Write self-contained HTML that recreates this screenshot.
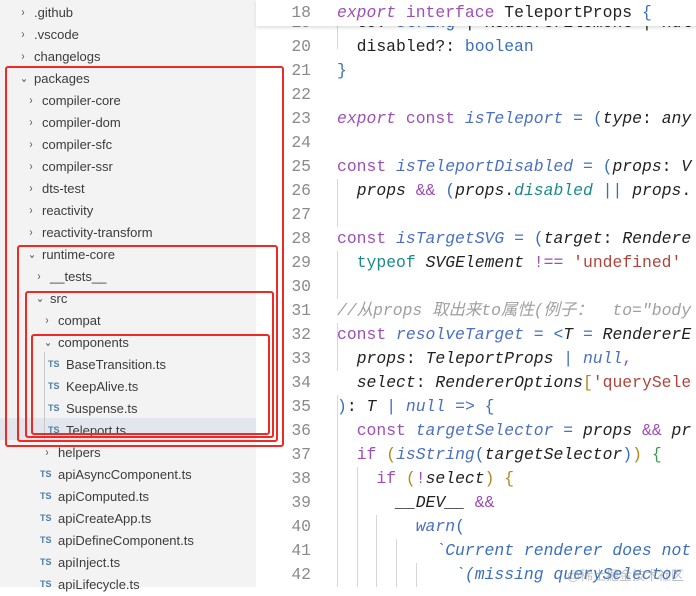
<!DOCTYPE html>
<html><head><meta charset="utf-8"><style>
*{margin:0;padding:0;box-sizing:border-box}
body{width:696px;height:587px;overflow:hidden;background:#fff;position:relative;font-family:"Liberation Sans","Noto Sans CJK SC",sans-serif}
#side{position:absolute;left:0;top:0;width:256px;height:587px;background:#f3f3f3}
.r{position:absolute;left:0;width:256px;height:22px;line-height:23px;font-size:13px;color:#3c3c3c;white-space:nowrap}
.r .c{position:absolute;top:0;font-size:12px;color:#555;transform:scaleX(.8)}
.r .t{position:absolute;top:0}
.ts{position:absolute;top:0;font-size:9px;font-weight:bold;color:#4a7ea8}
.box{position:absolute;border:2.5px solid #ee2a24;border-radius:3px}
#ed{position:absolute;left:256px;top:0;width:440px;height:587px;font-family:"Liberation Mono","Noto Sans CJK SC",monospace;font-size:16.4px}
.l{position:absolute;left:0;width:440px;height:24px;line-height:24px;white-space:pre}
.n{position:absolute;left:0;width:55px;text-align:right;color:#8a8a8a}
.k{position:absolute;left:81px;color:#222}
.p{color:#9d4fb8}.pi{color:#9d4fb8;font-style:italic}
.f{color:#4c6fc4;font-style:italic}.i{font-style:italic;color:#222}
.b{color:#3a6fc0}.s{color:#b0443c}.tq{color:#1a8a8a}.g{color:#a0a0a0;font-style:italic}
.y{color:#b08a1a}.tl{color:#3a6fc0;font-style:italic}.op{color:#4a6fc0}
.guide{position:absolute;width:1px;background:#d6d6d6}
</style></head><body>
<div id="side">
<div class="r" style="top:1px"><span class="c" style="left:21px">›</span><span class="t" style="left:34px">.github</span></div>
<div class="r" style="top:23px"><span class="c" style="left:21px">›</span><span class="t" style="left:34px">.vscode</span></div>
<div class="r" style="top:45px"><span class="c" style="left:21px">›</span><span class="t" style="left:34px">changelogs</span></div>
<div class="r" style="top:67px"><span class="c" style="left:19px">⌄</span><span class="t" style="left:34px">packages</span></div>
<div class="r" style="top:89px"><span class="c" style="left:29px">›</span><span class="t" style="left:42px">compiler-core</span></div>
<div class="r" style="top:111px"><span class="c" style="left:29px">›</span><span class="t" style="left:42px">compiler-dom</span></div>
<div class="r" style="top:133px"><span class="c" style="left:29px">›</span><span class="t" style="left:42px">compiler-sfc</span></div>
<div class="r" style="top:155px"><span class="c" style="left:29px">›</span><span class="t" style="left:42px">compiler-ssr</span></div>
<div class="r" style="top:177px"><span class="c" style="left:29px">›</span><span class="t" style="left:42px">dts-test</span></div>
<div class="r" style="top:199px"><span class="c" style="left:29px">›</span><span class="t" style="left:42px">reactivity</span></div>
<div class="r" style="top:221px"><span class="c" style="left:29px">›</span><span class="t" style="left:42px">reactivity-transform</span></div>
<div class="r" style="top:243px"><span class="c" style="left:27px">⌄</span><span class="t" style="left:42px">runtime-core</span></div>
<div class="r" style="top:265px"><span class="c" style="left:37px">›</span><span class="t" style="left:50px">__tests__</span></div>
<div class="r" style="top:287px"><span class="c" style="left:35px">⌄</span><span class="t" style="left:50px">src</span></div>
<div class="r" style="top:309px"><span class="c" style="left:45px">›</span><span class="t" style="left:58px">compat</span></div>
<div class="r" style="top:331px"><span class="c" style="left:43px">⌄</span><span class="t" style="left:58px">components</span></div>
<div class="r" style="top:353px"><span class="ts" style="left:48px">TS</span><span class="t" style="left:66px">BaseTransition.ts</span></div>
<div class="r" style="top:375px"><span class="ts" style="left:48px">TS</span><span class="t" style="left:66px">KeepAlive.ts</span></div>
<div class="r" style="top:397px"><span class="ts" style="left:48px">TS</span><span class="t" style="left:66px">Suspense.ts</span></div>
<div class="r" style="top:418px;background:#e4e6ee"><span class="ts" style="left:48px;top:1px">TS</span><span class="t" style="left:66px;top:1px">Teleport.ts</span></div>
<div class="guide" style="left:44px;top:352px;height:88px;background:#c8c8c8"></div>
<div class="r" style="top:441px"><span class="c" style="left:45px">›</span><span class="t" style="left:58px">helpers</span></div>
<div class="r" style="top:463px"><span class="ts" style="left:40px">TS</span><span class="t" style="left:58px">apiAsyncComponent.ts</span></div>
<div class="r" style="top:485px"><span class="ts" style="left:40px">TS</span><span class="t" style="left:58px">apiComputed.ts</span></div>
<div class="r" style="top:507px"><span class="ts" style="left:40px">TS</span><span class="t" style="left:58px">apiCreateApp.ts</span></div>
<div class="r" style="top:529px"><span class="ts" style="left:40px">TS</span><span class="t" style="left:58px">apiDefineComponent.ts</span></div>
<div class="r" style="top:551px"><span class="ts" style="left:40px">TS</span><span class="t" style="left:58px">apiInject.ts</span></div>
<div class="r" style="top:573px"><span class="ts" style="left:40px">TS</span><span class="t" style="left:58px">apiLifecycle.ts</span></div>
</div>
<div id="ed">
<div class="guide" style="left:81px;top:25px;height:24px"></div>
<div class="guide" style="left:81px;top:179px;height:48px"></div>
<div class="guide" style="left:81px;top:251px;height:48px"></div>
<div class="guide" style="left:81px;top:323px;height:48px"></div>
<div class="guide" style="left:81px;top:395px;height:192px"></div>
<div class="guide" style="left:101px;top:467px;height:120px"></div>
<div class="guide" style="left:120px;top:515px;height:72px"></div>
<div class="guide" style="left:140px;top:539px;height:48px"></div>
<div class="guide" style="left:160px;top:563px;height:24px"></div>
<div class="l" style="top:11px"><span class="n">19</span><span class="k">  to: <span class="b">string</span> | RendererElement | null</span></div>
<div class="l" style="top:35px"><span class="n">20</span><span class="k">  disabled?: <span class="b">boolean</span></span></div>
<div class="l" style="top:59px"><span class="n">21</span><span class="k"><span class="b">}</span></span></div>
<div class="l" style="top:83px"><span class="n">22</span></div>
<div class="l" style="top:107px"><span class="n">23</span><span class="k"><span class="pi">export</span> <span class="p">const</span> <span class="f">isTeleport</span> <span class="op">=</span> <span class="b">(</span><span class="i">type</span>: <span class="i">any</span></span></div>
<div class="l" style="top:131px"><span class="n">24</span></div>
<div class="l" style="top:155px"><span class="n">25</span><span class="k"><span class="p">const</span> <span class="f">isTeleportDisabled</span> <span class="op">=</span> <span class="b">(</span><span class="i">props</span>: <span class="i">V</span></span></div>
<div class="l" style="top:179px"><span class="n">26</span><span class="k">  <span class="i">props</span> <span class="p">&amp;&amp;</span> <span class="b">(</span><span class="i">props</span>.<span class="tq" style="font-style:italic">disabled</span> <span class="b">||</span> <span class="i">props</span>.</span></div>
<div class="l" style="top:203px"><span class="n">27</span></div>
<div class="l" style="top:227px"><span class="n">28</span><span class="k"><span class="p">const</span> <span class="f">isTargetSVG</span> <span class="op">=</span> <span class="b">(</span><span class="i">target</span>: <span class="i">Rendere</span></span></div>
<div class="l" style="top:251px"><span class="n">29</span><span class="k">  <span class="tq">typeof</span> <span class="i">SVGElement</span> <span class="p">!==</span> <span class="s">'undefined'</span></span></div>
<div class="l" style="top:275px"><span class="n">30</span></div>
<div class="l" style="top:299px"><span class="n">31</span><span class="k"><span class="g">//从props 取出来to属性(例子：  to="body</span></span></div>
<div class="l" style="top:323px"><span class="n">32</span><span class="k"><span class="p">const</span> <span class="f">resolveTarget</span> <span class="op">=</span> <span class="b">&lt;</span><span class="i">T</span> <span class="op">=</span> <span class="i">RendererE</span></span></div>
<div class="l" style="top:347px"><span class="n">33</span><span class="k">  <span class="i">props</span>: <span class="i">TeleportProps</span> <span class="b">|</span> <span class="f">null</span><span class="p">,</span></span></div>
<div class="l" style="top:371px"><span class="n">34</span><span class="k">  <span class="i">select</span>: <span class="i">RendererOptions</span><span class="y">[</span><span class="s">'querySele</span></span></div>
<div class="l" style="top:395px"><span class="n">35</span><span class="k"><span class="b">)</span>: <span class="i">T</span> <span class="b">|</span> <span class="f">null</span> <span class="op">=&gt;</span> <span class="b">{</span></span></div>
<div class="l" style="top:419px"><span class="n">36</span><span class="k">  <span class="p">const</span> <span class="f">targetSelector</span> <span class="op">=</span> <span class="i">props</span> <span class="p">&amp;&amp;</span> <span class="i">pr</span></span></div>
<div class="l" style="top:443px"><span class="n">37</span><span class="k">  <span class="p">if</span> <span class="y">(</span><span class="f">isString</span><span class="b">(</span><span class="i">targetSelector</span><span class="b">)</span><span class="y">)</span> <span class="y" style="color:#3a9a5a">{</span></span></div>
<div class="l" style="top:467px"><span class="n">38</span><span class="k">    <span class="p">if</span> <span class="y">(</span><span class="p">!</span><span class="i">select</span><span class="y">)</span> <span class="y">{</span></span></div>
<div class="l" style="top:491px"><span class="n">39</span><span class="k">      <span class="i">__DEV__</span> <span class="p">&amp;&amp;</span></span></div>
<div class="l" style="top:515px"><span class="n">40</span><span class="k">        <span class="f">warn</span><span class="b">(</span></span></div>
<div class="l" style="top:539px"><span class="n">41</span><span class="k">          <span class="tl">`Current renderer does not</span></span></div>
<div class="l" style="top:563px"><span class="n">42</span><span class="k">            <span class="tl">`(missing querySelector</span></span></div>
<div class="l" style="top:0;height:26px;background:#fff;box-shadow:0 2px 3px rgba(0,0,0,.12)"><span class="n" style="line-height:26px">18</span><span class="k" style="line-height:26px"><span class="pi">export</span> <span class="p">interface</span> TeleportProps <span class="b">{</span></span></div>
<div style="position:absolute;right:12px;top:565px;font-family:'Liberation Sans','Noto Sans CJK SC',sans-serif;font-size:13px;color:rgba(150,150,150,.6)">@稀土掘金技术社区</div>
</div>
<div class="box" style="left:5px;top:66px;width:279px;height:381px"></div>
<div class="box" style="left:17px;top:245px;width:261px;height:197px"></div>
<div class="box" style="left:25px;top:291px;width:249px;height:147px"></div>
<div class="box" style="left:31px;top:334px;width:239px;height:101px"></div>
</body></html>
